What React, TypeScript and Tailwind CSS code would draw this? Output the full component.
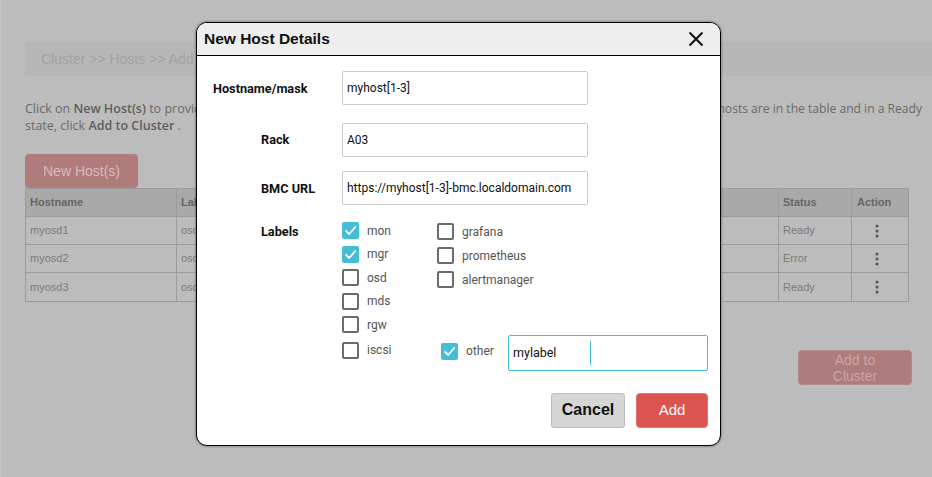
import React from "react";

function Check() {
  return (
    <svg width="13" height="13" viewBox="0 0 13 13" fill="none">
      <path d="M2 6.8 L5.2 10 L11.2 3" stroke="white" strokeWidth="1.8" strokeLinecap="round" strokeLinejoin="round" />
    </svg>
  );
}

function Box({ checked, label }: { checked?: boolean; label: string }) {
  return (
    <div className="flex items-center h-[17px]">
      {checked ? (
        <div className="w-[17px] h-[17px] rounded-[2px] bg-[#45bdd6] flex items-center justify-center">
          <Check />
        </div>
      ) : (
        <div className="w-[17px] h-[17px] rounded-[2px] border-2 border-[#6b6b6b] bg-white" />
      )}
      <span className="ml-[8px] text-[12px] text-[#555] leading-none">{label}</span>
    </div>
  );
}

function Kebab() {
  return (
    <svg width="4" height="14" viewBox="0 0 4 14">
      <circle cx="2" cy="2" r="1.5" fill="#555" />
      <circle cx="2" cy="7" r="1.5" fill="#555" />
      <circle cx="2" cy="12" r="1.5" fill="#555" />
    </svg>
  );
}

const rows = [
  { h: "myosd1", l: "osd", s: "Ready" },
  { h: "myosd2", l: "osd", s: "Error" },
  { h: "myosd3", l: "osd", s: "Ready" },
];

export default function App() {
  return (
    <div className="relative w-[932px] h-[477px] overflow-hidden bg-[#bcbcbc] border-l border-[#c6c6c6]" style={{ fontFamily: "'Liberation Sans', Arial, sans-serif" }}>
      {/* background page */}
      <div className="pt-[42px] pl-[24px]">
        <div className="h-[34px] bg-[#b7b7b7] flex items-center pl-[16px] text-[14px] text-[#a2a2a2]">
          Cluster &gt;&gt; Hosts &gt;&gt; Add Hosts
        </div>
        <div className="mt-[24px] pr-[10px] text-[12.5px] leading-[17px] text-[#6a6a6a]" style={{ fontFamily: "'Open Sans', sans-serif" }}>
          <div className="flex justify-between whitespace-nowrap">
            <span>Click on <b className="font-semibold text-[#5e5e5e]">New Host(s)</b> to provide</span>
            <span className="text-[12.1px]">hosts are in the table and in a Ready</span>
          </div>
          <div>state, click <b className="font-semibold text-[#5e5e5e]">Add to Cluster</b> .</div>
        </div>
        <div className="mt-[20px] w-[113px] h-[34px] rounded-[4px] bg-[#b07b7b] flex items-center justify-center text-[14px] text-[#d9baba]">
          New Host(s)
        </div>
        <div className="w-[884px] border border-[#9c9c9c] text-[11px]">
          <div className="flex h-[28px] bg-[#a9a9a9] font-bold text-[#666] border-b border-[#9c9c9c]">
            <div className="w-[151px] border-r border-[#9c9c9c] flex items-center pl-[4px]">Hostname</div>
            <div className="w-[300px] border-r border-[#9c9c9c] flex items-center pl-[4px]">Labels</div>
            <div className="flex-1 border-r border-[#9c9c9c]" />
            <div className="w-[73px] border-r border-[#9c9c9c] flex items-center pl-[4px]">Status</div>
            <div className="w-[56px] flex items-center pl-[5px]">Action</div>
          </div>
          {rows.map((r, i) => (
            <div key={r.h} className={`flex h-[28px] text-[#7b7b7b] ${i < 2 ? "border-b border-[#9c9c9c]" : ""}`}>
              <div className="w-[151px] border-r border-[#9c9c9c] flex items-center pl-[4px]">{r.h}</div>
              <div className="w-[300px] border-r border-[#9c9c9c] flex items-center pl-[4px]">{r.l}</div>
              <div className="flex-1 border-r border-[#9c9c9c]" />
              <div className="w-[73px] border-r border-[#9c9c9c] flex items-center pl-[4px]">{r.s}</div>
              <div className="w-[56px] flex items-center pl-[23px]"><Kebab /></div>
            </div>
          ))}
        </div>
        <div className="flex justify-end w-[887px] mt-[48px]">
          <div className="w-[114px] h-[35px] rounded-[4px] bg-[#ae7c7c] border border-[#b48888] flex items-center justify-center text-center text-[14px] leading-[16px] text-[#caa6a6]">
            Add to<br />Cluster
          </div>
        </div>
      </div>

      {/* modal */}
      <div className="absolute left-[195px] top-[22px] w-[525px] h-[424px] rounded-[11px] border-[1.5px] border-black bg-white overflow-hidden shadow-[0_0_2px_1px_rgba(0,0,0,0.25)]">
        <div className="h-[33px] bg-[#eeeeee] border-b-[1.5px] border-black flex items-center justify-between pl-[7px] pr-[16px]">
          <span className="text-[15.5px] font-bold text-[#111]">New Host Details</span>
          <svg width="16" height="16" viewBox="0 0 16 16" className="-ml-[2px]">
            <path d="M1.5 1.5 L14.5 14.5 M14.5 1.5 L1.5 14.5" stroke="#111" strokeWidth="2" />
          </svg>
        </div>
        <div className="pt-[15px] text-[12.7px]" style={{ fontFamily: "Roboto, sans-serif" }}>
          <div className="grid grid-cols-[145px_246px] items-center gap-y-[16px]">
            <div className="pl-[16px] font-bold text-[#111] pt-[2px]">Hostname/mask</div>
            <div className="h-[34px] border border-[#cccccc] rounded-[2px] flex items-center pl-[4px] text-[12px] text-[#111]">myhost[1-3]</div>
            <div className="pl-[64px] font-bold text-[#111] pt-[2px]">Rack</div>
            <div className="h-[34px] border border-[#cccccc] rounded-[2px] flex items-center pl-[4px] text-[12px] text-[#111] mt-[2px]">A03</div>
            <div className="pl-[64px] font-bold text-[#111]">BMC URL</div>
            <div className="h-[34px] border border-[#cccccc] rounded-[2px] flex items-center pl-[4px] text-[12px] text-[#111] whitespace-nowrap -mt-[2px]">https://myhost[1-3]-bmc.localdomain.com</div>
          </div>
          <div className="flex mt-[17px]">
            <div className="w-[145px] pl-[64px] pt-[1px] font-bold text-[#111] leading-[17px]">Labels</div>
            <div className="flex flex-col gap-[6.6px] w-[95px]">
              <Box checked label="mon" />
              <Box checked label="mgr" />
              <Box label="osd" />
              <Box label="mds" />
              <Box label="rgw" />
              <div className="mt-[2px]"><Box label="iscsi" /></div>
            </div>
            <div className="flex flex-col flex-1">
              <div className="flex flex-col gap-[7px] pt-[1px]">
                <Box label="grafana" />
                <Box label="prometheus" />
                <Box label="alertmanager" />
              </div>
              <div className="mt-auto flex items-center pl-[4px] pr-[12px] -mb-[12px]">
                <div className="w-[67px] -mt-[3px]"><Box checked label="other" /></div>
                <div className="flex-1 h-[36px] border border-[#45bdd6] rounded-[2px] flex items-center pl-[4px] text-[12.5px] text-[#111]">
                  mylabel
                  <span className="ml-[34px] w-px h-[24px] bg-[#45bdd6]" />
                </div>
              </div>
            </div>
          </div>
          <div className="flex justify-end gap-[11px] pr-[12px] mt-[34px]" style={{ fontFamily: "'Liberation Sans', Arial, sans-serif" }}>
            <div className="w-[74px] h-[35px] rounded-[3px] bg-[#d6d6d6] border border-[#bdbdbd] flex items-center justify-center text-[16px] font-bold text-[#111]">Cancel</div>
            <div className="w-[72px] h-[35px] rounded-[4px] bg-[#db5450] border border-[#e27370] flex items-center justify-center text-[15px] text-white">Add</div>
          </div>
        </div>
      </div>
    </div>
  );
}
